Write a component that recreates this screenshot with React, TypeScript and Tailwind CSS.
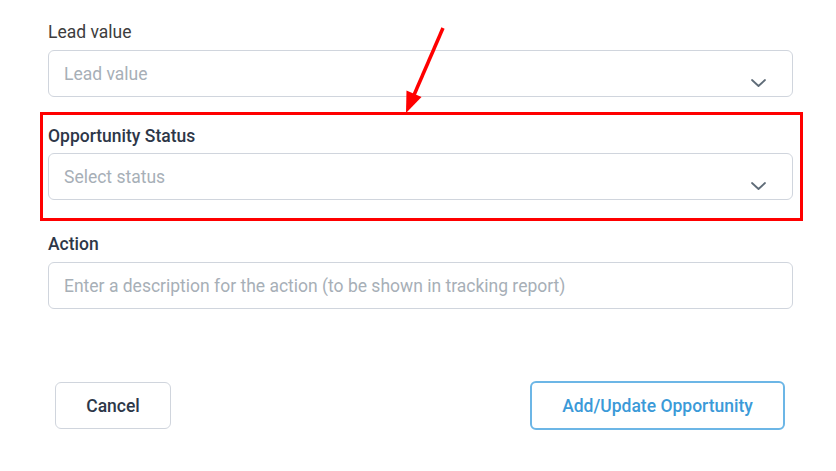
import React from "react";

function Chevron() {
  return (
    <svg
      className="absolute right-[26px] top-[28px]"
      width="15"
      height="8"
      viewBox="0 0 15 8"
      fill="none"
    >
      <path d="M1 1 L7.5 7 L14 1" stroke="#5f6c78" strokeWidth="1.8" strokeLinecap="round" strokeLinejoin="round" />
    </svg>
  );
}

function SelectBox({ placeholder }: { placeholder: string }) {
  return (
    <div className="relative h-[47px] w-full rounded-[6px] border border-[#d0d5dd] bg-white flex items-center pl-[15px] pt-[2px]">
      <span className="text-[17.5px] text-[#a7afb7]">{placeholder}</span>
      <Chevron />
    </div>
  );
}

export default function App() {
  return (
    <div
      className="relative w-[836px] h-[471px] bg-white overflow-hidden"
      style={{ fontFamily: "Roboto, 'Liberation Sans', sans-serif" }}
    >
      <div className="pl-[48px] pr-[43px] pt-[20px] flex flex-col">
        <label className="h-[24px] leading-[24px] text-[17.5px] text-[#3d3d3d]">Lead value</label>
        <div className="mt-[6px]">
          <SelectBox placeholder="Lead value" />
        </div>

        <label className="mt-[27px] h-[24px] leading-[24px] text-[17.5px] font-medium text-[#2d3748]">
          Opportunity Status
        </label>
        <div className="mt-[5px]">
          <SelectBox placeholder="Select status" />
        </div>

        <label className="mt-[32px] h-[24px] leading-[24px] text-[17.5px] font-medium text-[#2d3748]">
          Action
        </label>
        <input
          className="mt-[6px] h-[47px] w-full rounded-[6px] border border-[#d0d5dd] bg-white pl-[15px] pt-[1px] text-[17.5px] text-[#2d3748] placeholder:text-[#a7afb7] outline-none"
          placeholder="Enter a description for the action (to be shown in tracking report)"
        />

        <div className="mt-[72px] flex items-center justify-between pl-[7px] pr-[8px]">
          <button className="h-[47px] w-[116px] rounded-[6px] border border-[#d0d5dd] bg-white pt-[1px] text-[17.5px] font-medium text-[#2d3748]">
            Cancel
          </button>
          <button className="h-[49px] w-[255px] rounded-[6px] border-2 border-[#6cb6e6] bg-white pt-[1px] text-[17.5px] font-medium text-[#3b9ad8]">
            Add/Update Opportunity
          </button>
        </div>
      </div>

      {/* Annotation highlight box */}
      <div className="absolute left-[40px] top-[112px] w-[763px] h-[109px] border-[3px] border-[#ff0000] pointer-events-none" />

      {/* Annotation arrow */}
      <svg className="absolute left-0 top-0 pointer-events-none" width="836" height="471">
        <line x1="443" y1="28" x2="414" y2="95" stroke="#ff0000" strokeWidth="3.5" />
        <polygon points="406,113 421.5,97 406.5,90.5" fill="#ff0000" />
      </svg>
    </div>
  );
}
